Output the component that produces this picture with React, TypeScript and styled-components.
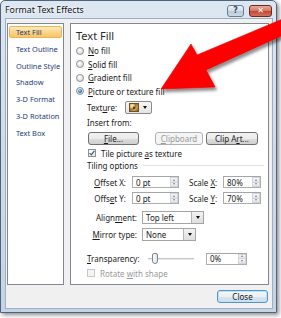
import React from 'react';
import styled, { createGlobalStyle, css } from 'styled-components';

const GlobalStyle = createGlobalStyle`
  html, body {
    margin: 0;
    padding: 0;
    background: #fff;
  }
  body {
    font-family: "Noto Sans", "Open Sans", sans-serif;
    font-size: 8px;
    color: #1a1a1a;
  }
`;

const Stage = styled.div`
  position: relative;
  width: 281px;
  height: 318px;
  overflow: hidden;
  background: #fff;
`;

const Window = styled.div`
  width: 277px;
  height: 313px;
  box-sizing: border-box;
  border: 1px solid #4f6479;
  border-radius: 5px 5px 0 0;
  background: linear-gradient(180deg, #dce7f2 0%, #cfdcea 45%, #c4d4e6 100%);
  box-shadow: 2px 2px 4px rgba(0, 0, 0, 0.45);
  padding: 0 3px 3px 4px;
  display: flex;
  flex-direction: column;
`;

const TitleBar = styled.div`
  height: 17px;
  flex-shrink: 0;
  display: flex;
  align-items: center;
  font-size: 8.8px;
  color: #111;
`;

const TitleText = styled.span`
  flex: 1;
  text-shadow: 0 0 4px #fff, 0 0 2px #fff;
`;

const CaptionButtons = styled.div`
  display: flex;
  gap: 5px;
  margin-right: 1px;
  align-self: flex-start;
  margin-top: 4px;
`;

const CaptionButton = styled.div<{ $close?: boolean }>`
  width: ${({ $close }) => ($close ? 23 : 17)}px;
  height: 12px;
  box-sizing: border-box;
  border-radius: 3px;
  border: 1px solid ${({ $close }) => ($close ? '#6e2a20' : '#6b7d92')};
  background: ${({ $close }) =>
    $close
      ? 'linear-gradient(180deg, #e8a898 0%, #d77a66 45%, #c14a36 55%, #d5705a 100%)'
      : 'linear-gradient(180deg, #eef3f8 0%, #d3dfeb 45%, #bccbdc 55%, #cbd8e6 100%)'};
  display: flex;
  align-items: center;
  justify-content: center;
  color: ${({ $close }) => ($close ? '#fff' : '#3c4a5a')};
  font-family: "DejaVu Sans", sans-serif;
  font-weight: bold;
  font-size: 8px;
  line-height: 1;
`;

const Client = styled.div`
  flex: 1;
  box-sizing: border-box;
  border: 1px solid #9fb0c2;
  background: #f0f0f0;
  padding: 4px 3px 0 1px;
  display: flex;
  flex-direction: column;
`;

const Main = styled.div`
  height: 262px;
  flex-shrink: 0;
  display: flex;
  gap: 6px;
`;

const NavList = styled.div`
  width: 57px;
  height: 100%;
  box-sizing: border-box;
  border: 1px solid #828790;
  background: #fff;
  padding: 2px 1px 0;
`;

const NavItem = styled.div<{ $active?: boolean }>`
  height: 12px;
  box-sizing: border-box;
  margin-bottom: 4.8px;
  padding-left: 6px;
  line-height: 11px;
  font-size: 7.4px;
  color: #1d3a78;
  white-space: nowrap;
  border: 1px solid transparent;
  border-radius: 2px;
  ${({ $active }) =>
    $active &&
    css`
      border-color: #e9b557;
      background: linear-gradient(180deg, #fdebbf 0%, #fbd58a 50%, #f9c463 100%);
    `}
`;

const Panel = styled.div`
  width: 199px;
  height: 100%;
  box-sizing: border-box;
  border: 1px solid #828790;
  background: #fff;
  padding: 0 2px 0 5px;
  display: flex;
  flex-direction: column;
`;

const Heading = styled.div`
  height: 17px;
  margin-top: 3px;
  flex-shrink: 0;
  display: flex;
  align-items: center;
  font-size: 11px;
  color: #2b2b2b;
`;

const Row = styled.div<{ $h: number; $mt?: number; $indent?: number }>`
  height: ${({ $h }) => $h}px;
  margin-top: ${({ $mt }) => $mt ?? 0}px;
  padding-left: ${({ $indent }) => $indent ?? 0}px;
  flex-shrink: 0;
  display: flex;
  align-items: center;
  white-space: nowrap;
`;

const Label = styled.span<{ $w?: number; $right?: boolean; $muted?: boolean; $mr?: number; $ml?: number }>`
  display: inline-block;
  flex-shrink: 0;
  width: ${({ $w }) => ($w ? `${$w}px` : 'auto')};
  text-align: ${({ $right }) => ($right ? 'right' : 'left')};
  margin-right: ${({ $mr }) => $mr ?? 0}px;
  margin-left: ${({ $ml }) => $ml ?? 0}px;
  color: ${({ $muted }) => ($muted ? '#9a9a9a' : '#1a1a1a')};
`;

const Acc = styled.span`
  text-decoration: underline;
  text-underline-offset: 1px;
`;

const Radio = styled.span<{ $on?: boolean }>`
  position: relative;
  width: 8px;
  height: 8px;
  flex-shrink: 0;
  box-sizing: border-box;
  border-radius: 50%;
  border: 1px solid #8e8f8f;
  background: radial-gradient(circle at 40% 35%, #ffffff 0%, #e4e4e4 60%, #cfcfcf 100%);
  margin-right: 4px;
  ${({ $on }) =>
    $on &&
    css`
      &::after {
        content: '';
        position: absolute;
        left: 1px;
        top: 1px;
        width: 4px;
        height: 4px;
        border-radius: 50%;
        background: radial-gradient(circle at 40% 35%, #a6dcff 0%, #2277cc 55%, #0c4584 100%);
      }
    `}
`;

const Check = styled.span<{ $disabled?: boolean }>`
  width: 8px;
  height: 8px;
  flex-shrink: 0;
  box-sizing: border-box;
  border: 1px solid ${({ $disabled }) => ($disabled ? '#c7c7c7' : '#8e8f8f')};
  background: ${({ $disabled }) =>
    $disabled ? '#f4f4f4' : 'linear-gradient(135deg, #ffffff 0%, #e6e6e6 100%)'};
  margin-right: 5px;
  display: flex;
  align-items: center;
  justify-content: center;
`;

const PushButton = styled.div<{ $w: number; $disabled?: boolean; $default?: boolean; $ml?: number }>`
  width: ${({ $w }) => $w}px;
  height: 13px;
  flex-shrink: 0;
  box-sizing: border-box;
  margin-left: ${({ $ml }) => $ml ?? 0}px;
  border-radius: 3px;
  display: flex;
  align-items: center;
  justify-content: center;
  border: 1px solid #707070;
  background: linear-gradient(180deg, #f2f2f2 0%, #ebebeb 50%, #dddddd 51%, #cfcfcf 100%);
  color: #1a1a1a;
  ${({ $disabled }) =>
    $disabled &&
    css`
      border-color: #adb2b5;
      background: #f4f4f4;
      color: #9a9a9a;
    `}
  ${({ $default }) =>
    $default &&
    css`
      border-color: #4f96cf;
      box-shadow: inset 0 0 0 1px #bfe2f8;
      background: linear-gradient(180deg, #f4f8fb 0%, #e9eff4 50%, #dbe5ee 51%, #d0dce8 100%);
    `}
`;

const TextureButton = styled.div`
  width: 27px;
  height: 13px;
  box-sizing: border-box;
  border: 1px solid #8a8a8a;
  border-radius: 2px;
  background: linear-gradient(180deg, #f6f6f6 0%, #e4e4e4 100%);
  display: flex;
  align-items: center;
  padding-left: 3px;
  gap: 4px;
`;

const Swatch = styled.span`
  width: 10px;
  height: 9px;
  border: 1px solid #6d5127;
  box-sizing: border-box;
  background:
    radial-gradient(circle at 50% 55%, #5a3c17 0 18%, transparent 30%),
    radial-gradient(circle at 30% 30%, #f3d98f 0 20%, transparent 40%),
    linear-gradient(135deg, #d8b56a 0%, #9a7434 45%, #caa258 70%, #7c5b26 100%);
`;

const Arrow = styled.span`
  width: 0;
  height: 0;
  border-left: 2.5px solid transparent;
  border-right: 2.5px solid transparent;
  border-top: 3px solid #111;
`;

const Field = styled.div<{ $w: number; $ml?: number }>`
  width: ${({ $w }) => $w}px;
  height: 12px;
  flex-shrink: 0;
  box-sizing: border-box;
  margin-left: ${({ $ml }) => $ml ?? 0}px;
  border: 1px solid #abadb3;
  border-top-color: #a3a6ad;
  background: #fff;
  display: flex;
  align-items: stretch;
  padding-left: 3px;
`;

const FieldText = styled.span`
  flex: 1;
  display: flex;
  align-items: center;
`;

const Spinner = styled.span`
  width: 8px;
  display: flex;
  flex-direction: column;
`;

const SpinPart = styled.span<{ $down?: boolean }>`
  flex: 1;
  box-sizing: border-box;
  border: 1px solid #d2d5d9;
  ${({ $down }) => ($down ? 'border-top: none;' : '')}
  background: linear-gradient(180deg, #f7f7f7 0%, #e3e3e3 100%);
  display: flex;
  align-items: center;
  justify-content: center;
  &::after {
    content: '';
    width: 0;
    height: 0;
    border-left: 1.5px solid transparent;
    border-right: 1.5px solid transparent;
    ${({ $down }) =>
      $down ? 'border-top: 2px solid #7b8794;' : 'border-bottom: 2px solid #7b8794;'}
  }
`;

const Combo = styled.div<{ $w: number }>`
  width: ${({ $w }) => $w}px;
  height: 13px;
  flex-shrink: 0;
  box-sizing: border-box;
  border: 1px solid #a5a5a5;
  background: #fff;
  display: flex;
  align-items: stretch;
  padding-left: 3px;
`;

const DropButton = styled.span`
  width: 12px;
  box-sizing: border-box;
  border-left: 1px solid #b5b5b5;
  background: linear-gradient(180deg, #f3f3f3 0%, #dedede 100%);
  display: flex;
  align-items: center;
  justify-content: center;
`;

const GroupTitle = styled.span`
  margin-right: 5px;
`;

const Rule = styled.span`
  flex: 1;
  height: 1px;
  background: #dde3e8;
  margin-right: 2px;
`;

const Slider = styled.div`
  position: relative;
  width: 46px;
  height: 100%;
  margin-left: 11px;
  flex-shrink: 0;
`;

const Track = styled.span`
  position: absolute;
  left: 0;
  right: 0;
  top: 50%;
  height: 2px;
  margin-top: -1px;
  background: #e7eaea;
  border-top: 1px solid #c4c7c9;
  box-sizing: border-box;
`;

const Thumb = styled.span`
  position: absolute;
  left: 4px;
  top: 3px;
  width: 6px;
  height: 11px;
  box-sizing: border-box;
  border: 1px solid #7b8794;
  border-radius: 2px 2px 3px 3px;
  background: linear-gradient(90deg, #fafafa 0%, #e2e5e8 100%);
`;

const Footer = styled.div`
  display: flex;
  justify-content: flex-end;
  margin-top: 5px;
  padding-right: 1px;
`;

const Overlay = styled.svg`
  position: absolute;
  left: 0;
  top: 0;
  pointer-events: none;
`;

const navItems = [
  'Text Fill',
  'Text Outline',
  'Outline Style',
  'Shadow',
  '3-D Format',
  '3-D Rotation',
  'Text Box',
];

const Spin = () => (
  <Spinner>
    <SpinPart />
    <SpinPart $down />
  </Spinner>
);

const Drop = () => (
  <DropButton>
    <Arrow />
  </DropButton>
);

const CheckMark = () => (
  <svg width="6" height="6" viewBox="0 0 6 6">
    <path d="M0.6 3.1 L2.3 4.9 L5.4 0.8" fill="none" stroke="#3b5a8c" strokeWidth="1.2" />
  </svg>
);

export default function App() {
  return (
    <Stage>
      <GlobalStyle />
      <Window>
        <TitleBar>
          <TitleText>Format Text Effects</TitleText>
          <CaptionButtons>
            <CaptionButton>?</CaptionButton>
            <CaptionButton $close>✕</CaptionButton>
          </CaptionButtons>
        </TitleBar>
        <Client>
          <Main>
            <NavList>
              {navItems.map((item, i) => (
                <NavItem key={item} $active={i === 0}>
                  {item}
                </NavItem>
              ))}
            </NavList>
            <Panel>
              <Heading>Text Fill</Heading>
              <Row $h={13.5}>
                <Radio />
                <Label><Acc>N</Acc>o fill</Label>
              </Row>
              <Row $h={13.5}>
                <Radio />
                <Label><Acc>S</Acc>olid fill</Label>
              </Row>
              <Row $h={13.5}>
                <Radio />
                <Label><Acc>G</Acc>radient fill</Label>
              </Row>
              <Row $h={13.5}>
                <Radio $on />
                <Label><Acc>P</Acc>icture or texture fill</Label>
              </Row>
              <Row $h={18} $indent={11}>
                <Label $w={38}>Text<Acc>u</Acc>re:</Label>
                <TextureButton>
                  <Swatch />
                  <Arrow />
                </TextureButton>
              </Row>
              <Row $h={13} $indent={11}>
                <Label>Insert from:</Label>
              </Row>
              <Row $h={18} $indent={12}>
                <PushButton $w={51}><Acc>F</Acc>ile...</PushButton>
                <PushButton $w={48} $ml={16} $disabled><Acc>C</Acc>lipboard</PushButton>
                <PushButton $w={52} $ml={3}>Clip A<Acc>r</Acc>t...</PushButton>
              </Row>
              <Row $h={12} $indent={12}>
                <Check>
                  <CheckMark />
                </Check>
                <Label>Tile picture <Acc>a</Acc>s texture</Label>
              </Row>
              <Row $h={12} $indent={11}>
                <GroupTitle>Tiling options</GroupTitle>
                <Rule />
              </Row>
              <Row $h={16} $mt={3} $indent={11}>
                <Label $w={39} $right $mr={6}><Acc>O</Acc>ffset X:</Label>
                <Field $w={47}>
                  <FieldText>0 pt</FieldText>
                  <Spin />
                </Field>
                <Label $w={28} $mr={6} $ml={10}>Scale <Acc>X</Acc>:</Label>
                <Field $w={38}>
                  <FieldText>80%</FieldText>
                  <Spin />
                </Field>
              </Row>
              <Row $h={16} $indent={11}>
                <Label $w={39} $right $mr={6}>Offs<Acc>e</Acc>t Y:</Label>
                <Field $w={47}>
                  <FieldText>0 pt</FieldText>
                  <Spin />
                </Field>
                <Label $w={28} $mr={6} $ml={10}>Scale <Acc>Y</Acc>:</Label>
                <Field $w={38}>
                  <FieldText>70%</FieldText>
                  <Spin />
                </Field>
              </Row>
              <Row $h={18} $mt={2} $indent={11}>
                <Label $w={50} $right $mr={5}>Align<Acc>m</Acc>ent:</Label>
                <Combo $w={62}>
                  <FieldText>Top left</FieldText>
                  <Drop />
                </Combo>
              </Row>
              <Row $h={16} $indent={11}>
                <Label $w={50} $right $mr={5}><Acc>M</Acc>irror type:</Label>
                <Combo $w={54}>
                  <FieldText>None</FieldText>
                  <Drop />
                </Combo>
              </Row>
              <Row $h={17} $mt={8} $indent={11}>
                <Label $w={50}><Acc>T</Acc>ransparency:</Label>
                <Slider>
                  <Track />
                  <Thumb />
                </Slider>
                <Field $w={41} $ml={12}>
                  <FieldText>0%</FieldText>
                  <Spin />
                </Field>
              </Row>
              <Row $h={12} $indent={11}>
                <Check $disabled />
                <Label $muted>Rotate <Acc>w</Acc>ith shape</Label>
              </Row>
            </Panel>
          </Main>
          <Footer>
            <PushButton $w={51} $default>Close</PushButton>
          </Footer>
        </Client>
      </Window>
      <Overlay width="281" height="318" viewBox="0 0 281 318">
        <defs>
          <filter id="arrowShadow" x="-20%" y="-20%" width="140%" height="140%">
            <feDropShadow dx="2" dy="3" stdDeviation="1.6" floodColor="#000" floodOpacity="0.45" />
          </filter>
        </defs>
        <polygon
          points="161,89 191,44 197,55 292,15 292,31 206,70 215,87"
          fill="#ff0000"
          stroke="#e00000"
          strokeWidth="0.6"
          filter="url(#arrowShadow)"
        />
      </Overlay>
    </Stage>
  );
}
